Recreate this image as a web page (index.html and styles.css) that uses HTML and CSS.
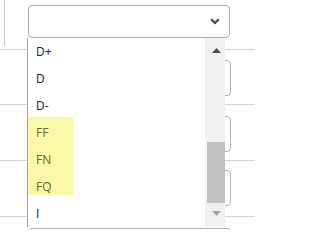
FILE: index.html
```html
<!DOCTYPE html>
<html>
<head>
<meta charset="utf-8">
<link rel="stylesheet" href="styles.css">
</head>
<body>
<div class="page">
  <div class="table">
    <div class="row r0">
      <div class="stub"></div>
      <div class="select">
        <svg class="chev" width="10" height="7" viewBox="0 0 10 7"><path d="M1.2 1.3 L5 5 L8.8 1.3" fill="none" stroke="#444" stroke-width="2"/></svg>
      </div>
    </div>
    <div class="row r1"><div class="box b1"></div></div>
    <div class="row r2"><div class="box b2"></div></div>
    <div class="row r3"><div class="box b3"></div></div>
    <div class="row r4"><div class="box b4"></div></div>
  </div>
  <div class="list">
    <div class="items">
      <div class="mark"></div>
      <div class="item">D+</div>
      <div class="item">D</div>
      <div class="item">D-</div>
      <div class="item hl">FF</div>
      <div class="item hl">FN</div>
      <div class="item hl">FQ</div>
      <div class="item">I</div>
    </div>
    <div class="scrollbar">
      <div class="sb-btn up"><svg width="9" height="5" viewBox="0 0 9 5"><path d="M0 5 L4.5 0 L9 5 Z" fill="#505050"/></svg></div>
      <div class="sb-track"><div class="thumb"></div></div>
      <div class="sb-btn down"><svg width="9" height="5" viewBox="0 0 9 5"><path d="M0 0 L4.5 5 L9 0 Z" fill="#a3a3a3"/></svg></div>
    </div>
  </div>
</div>
</body>
</html>
```
FILE: styles.css
```css
html, body {
  margin: 0;
  padding: 0;
  background: #fff;
}
.page {
  position: relative;
  width: 255px;
  height: 230px;
  overflow: hidden;
  font-family: "Open Sans", "Noto Sans", sans-serif;
}
.table {
  display: flex;
  flex-direction: column;
}
.row {
  display: flex;
  align-items: flex-start;
  border-bottom: 1px solid #c9d3dd;
  box-sizing: content-box;
}
.r0 { height: 49px; }
.r1 { height: 54px; }
.r2 { height: 55px; }
.r3 { height: 55px; }
.r4 { height: 40px; border-bottom: none; }
.stub {
  width: 4px;
  height: 46px;
  border-right: 1px solid #bcc7d2;
}
.select {
  margin-left: 23px;
  margin-top: 5px;
  width: 202px;
  height: 33px;
  box-sizing: border-box;
  border: 1px solid #a9a9a9;
  border-radius: 4px;
  display: flex;
  align-items: center;
  justify-content: flex-end;
  padding-right: 9px;
}
.chev { display: block; }
.box {
  margin-left: 28px;
  width: 203px;
  height: 36px;
  box-sizing: border-box;
  border: 1px solid #b4b4b4;
  border-radius: 4px;
}
.b1 { margin-top: 10px; }
.b2 { margin-top: 11px; }
.b3 { margin-top: 9px; }
.b4 { margin-top: 11px; }
.list {
  position: absolute;
  left: 27px;
  top: 38px;
  width: 198px;
  height: 189px;
  box-sizing: border-box;
  border-left: 1px solid #a6a6a6;
  background: #fff;
  display: flex;
}
.items {
  position: relative;
  flex: 1;
}
.mark {
  position: absolute;
  left: 0;
  top: 79px;
  width: 45px;
  height: 78px;
  background: #fbf8a6;
}
.item {
  position: relative;
  height: 27px;
  line-height: 27px;
  padding-left: 8px;
  font-size: 12px;
  color: #222;
}
.item.hl { color: #6b6830; }
.scrollbar {
  width: 20px;
  background: #f1f1f1;
  display: flex;
  flex-direction: column;
}
.sb-btn {
  display: flex;
  align-items: center;
  justify-content: center;
  padding-left: 2px;
}
.sb-btn svg { display: block; }
.sb-btn.up { height: 25px; }
.sb-btn.down { height: 21px; padding-bottom: 3px; }
.sb-track {
  flex: 1;
  display: flex;
  flex-direction: column;
  justify-content: flex-end;
}
.thumb {
  margin-left: 2px;
  height: 61px;
  background: #c1c1c1;
}
```
